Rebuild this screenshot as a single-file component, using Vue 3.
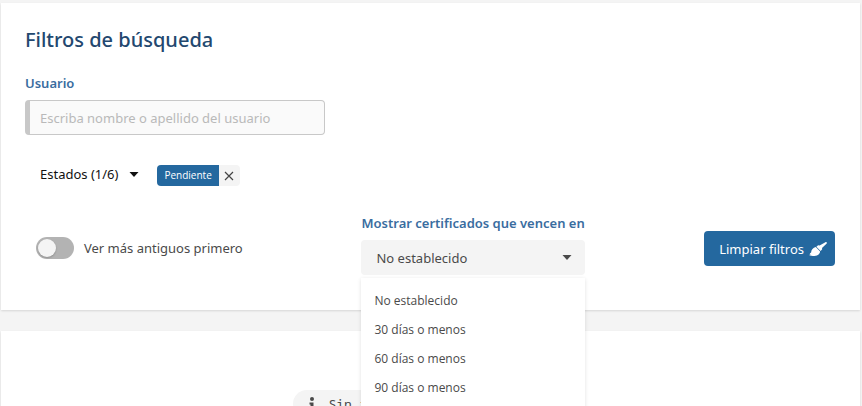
<script setup>
import { ref } from 'vue'

const user = ref('')
const states = ref(['Pendiente'])
const oldestFirst = ref(false)
const options = ['No establecido', '30 días o menos', '60 días o menos', '90 días o menos']
const expiry = ref(options[0])
const menuOpen = ref(true)

function choose(option) {
  expiry.value = option
  menuOpen.value = false
}

function removeState(name) {
  states.value = states.value.filter((s) => s !== name)
}

function clearFilters() {
  user.value = ''
  states.value = []
  oldestFirst.value = false
  expiry.value = options[0]
}
</script>

<template>
  <main class="page">
    <section class="card filters">
      <h1 class="title">Filtros de búsqueda</h1>

      <div class="field">
        <label class="label" for="user">Usuario</label>
        <input id="user" v-model="user" class="text-input" type="text" placeholder="Escriba nombre o apellido del usuario" />
      </div>

      <div class="states">
        <button class="states-toggle" type="button" aria-haspopup="listbox">
          Estados ({{ states.length }}/6)
          <svg class="caret" viewBox="0 0 10 5" aria-hidden="true"><path d="M0.5 0h9L5 5z" /></svg>
        </button>
        <span v-for="state in states" :key="state" class="tag">
          <span class="tag-name">{{ state }}</span>
          <button class="tag-remove" type="button" aria-label="Quitar" @click="removeState(state)">
            <svg class="cross" viewBox="0 0 10 10" aria-hidden="true"><path d="M1 1l8 8M9 1L1 9" /></svg>
          </button>
        </span>
      </div>

      <div class="actions">
        <label class="switch">
          <input v-model="oldestFirst" class="switch-input" type="checkbox" />
          <span>Ver más antiguos primero</span>
        </label>

        <div class="expiry">
          <label class="label" for="expiry">Mostrar certificados que vencen en</label>
          <div class="select-wrap">
            <select id="expiry" v-model="expiry" class="select">
              <option v-for="option in options" :key="option">{{ option }}</option>
            </select>
            <svg class="caret select-caret" viewBox="0 0 10 5" aria-hidden="true"><path d="M0.5 0h9L5 5z" /></svg>
            <ul v-if="menuOpen" class="menu" role="listbox">
              <li v-for="option in options" :key="option" class="menu-item" role="option" @click="choose(option)">{{ option }}</li>
            </ul>
          </div>
        </div>

        <button class="clear" type="button" @click="clearFilters">
          Limpiar filtros
          <svg class="brush" viewBox="0 0 18 14" aria-hidden="true">
            <path d="M16.4 0.2c0.8-0.5 1.9 0.4 1.3 1.2L13 6l0.2 1.2-1.6 1.7-4.2-4.2 1.7-1.5 1.5 0.4z" />
            <path d="M6.8 5.1l4.3 4.3c-0.2 2.6-2.6 4.6-5.8 4.6-1.9 0-3.8-0.3-5.3-1.1l1.7-0.7-1-0.7 1.4-0.9c0.1-2.8 2-5 4.7-5.5z" />
          </svg>
        </button>
      </div>
    </section>

    <section class="card results">
      <p class="notice">
        <svg class="info" viewBox="0 0 6 14" aria-hidden="true">
          <circle cx="3" cy="2" r="2" />
          <path d="M0.5 5.5h4v6.5H6V14H0v-2h1.5V7.5h-1z" />
        </svg>
        Sin resultados
      </p>
    </section>
  </main>
</template>

<style>
body {
  margin: 0;
  background: #f4f4f4;
}
</style>

<style scoped>
* {
  box-sizing: border-box;
}

.page {
  display: flex;
  flex-direction: column;
  gap: 21px;
  height: 100vh;
  padding: 3px 2px 0 1px;
  overflow: hidden;
  font-family: "Noto Sans", "Open Sans", sans-serif;
  font-size: 13px;
  line-height: 20px;
  color: #4a4a4a;
}

button,
input,
select {
  font: inherit;
}

.card {
  background: #fff;
  box-shadow: 0 1px 2px rgba(0, 0, 0, 0.12);
}

.filters {
  padding: 23px 25px 35px 24px;
}

.title {
  margin: 0;
  font-size: 20px;
  font-weight: 500;
  line-height: 28px;
  color: #23486f;
}

.label {
  display: block;
  font-weight: 600;
  color: #3a6d9f;
}

.field {
  margin-top: 19px;
}

.text-input {
  display: block;
  width: 300px;
  height: 35px;
  margin-top: 7px;
  padding: 0 10px;
  border: 1px solid #c8c8c8;
  border-left-width: 5px;
  border-radius: 4px;
  background: #fafafa;
  color: #4a4a4a;
}

.text-input::placeholder {
  color: #b9b9b9;
}

.states {
  display: flex;
  align-items: center;
  gap: 18px;
  margin: 29px 0 26px;
  padding-left: 15px;
}

.states-toggle {
  display: flex;
  align-items: center;
  gap: 11px;
  padding: 0 0 3px;
  border: 0;
  background: none;
  color: #111;
}

.caret {
  width: 10px;
  height: 5px;
  fill: currentColor;
}

.tag {
  display: flex;
  height: 21px;
  overflow: hidden;
  border-radius: 4px;
  background: #f4f4f4;
  font-family: "Open Sans", "Noto Sans", sans-serif;
  font-size: 10px;
  line-height: 20px;
}

.tag-name {
  padding: 0 7px;
  background: #24689f;
  color: #fff;
}

.tag-remove {
  display: flex;
  align-items: center;
  justify-content: center;
  width: 21px;
  padding: 0;
  border: 0;
  background: none;
}

.cross {
  width: 10px;
  height: 10px;
  fill: none;
  stroke: #444;
  stroke-width: 1.2;
}

.actions {
  display: flex;
  align-items: flex-end;
  justify-content: space-between;
}

.switch {
  display: flex;
  align-items: center;
  gap: 10px;
  padding: 0 0 16px 11px;
}

.switch-input {
  width: 38px;
  height: 22px;
  margin: 0;
  padding: 2px;
  border-radius: 11px;
  background: #b3b3b3;
  appearance: none;
}

.switch-input::before {
  display: block;
  width: 18px;
  height: 18px;
  border-radius: 50%;
  background: #f4f4f4;
  box-shadow: 0 1px 2px rgba(0, 0, 0, 0.2);
  content: "";
}

.switch-input:checked::before {
  margin-left: auto;
}

.expiry {
  width: 224px;
  white-space: nowrap;
}

.select-wrap {
  position: relative;
  margin-top: 7px;
}

.select {
  display: block;
  width: 100%;
  height: 35px;
  padding: 0 15px;
  border: 0;
  border-radius: 4px;
  background: #f4f4f4;
  color: #4a4a4a;
  appearance: none;
}

.select-caret {
  position: absolute;
  top: 15px;
  right: 13px;
  pointer-events: none;
}

.menu {
  position: absolute;
  top: 38px;
  left: 0;
  z-index: 1;
  width: 100%;
  margin: 0;
  padding: 9px 0;
  background: #fff;
  box-shadow: 0 1px 4px rgba(0, 0, 0, 0.12);
  font-family: "Open Sans", "Noto Sans", sans-serif;
  font-size: 12px;
  list-style: none;
}

.menu-item {
  padding: 4px 13px 5px;
}

.clear {
  display: flex;
  align-items: center;
  gap: 5px;
  height: 35px;
  margin-bottom: 9px;
  padding: 0 8px 0 15px;
  border: 0;
  border-radius: 4px;
  background: #24689f;
  color: #fff;
}

.brush {
  width: 18px;
  height: 14px;
  fill: currentColor;
}

.results {
  display: flex;
  flex: 1;
  align-items: flex-start;
  justify-content: center;
  padding-top: 59px;
}

.notice {
  display: flex;
  flex-shrink: 0;
  align-items: center;
  gap: 14px;
  width: 276px;
  margin: 0;
  padding: 4px 16px;
  border-radius: 14px;
  background: #f4f4f4;
  font-family: "Noto Sans Mono", "DejaVu Sans Mono", monospace;
}

.info {
  width: 6px;
  height: 14px;
  fill: currentColor;
}
</style>
